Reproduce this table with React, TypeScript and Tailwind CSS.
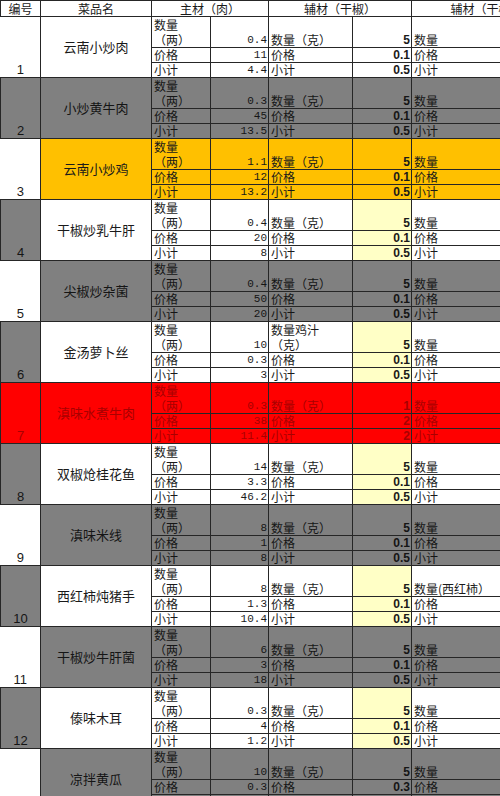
import React from "react";

type Tone = "white" | "gray" | "orange" | "red";

interface Dish {
	no: number;
	name: string;
	tone: Tone;
	noTone: Tone;
	main: [string, string, string];
	aux: [string, string, string];
	auxLabel?: React.ReactNode;
	extraLabel?: string;
	plainAux?: boolean;
}

const dishes: Dish[] = [
	{ no: 1, name: "云南小炒肉", tone: "white", noTone: "white", main: ["0.4", "11", "4.4"], aux: ["5", "0.1", "0.5"], plainAux: true },
	{ no: 2, name: "小炒黄牛肉", tone: "gray", noTone: "gray", main: ["0.3", "45", "13.5"], aux: ["5", "0.1", "0.5"] },
	{ no: 3, name: "云南小炒鸡", tone: "orange", noTone: "white", main: ["1.1", "12", "13.2"], aux: ["5", "0.1", "0.5"] },
	{ no: 4, name: "干椒炒乳牛肝", tone: "white", noTone: "gray", main: ["0.4", "20", "8"], aux: ["5", "0.1", "0.5"] },
	{ no: 5, name: "尖椒炒杂菌", tone: "gray", noTone: "white", main: ["0.4", "50", "20"], aux: ["5", "0.1", "0.5"] },
	{
		no: 6,
		name: "金汤萝卜丝",
		tone: "white",
		noTone: "gray",
		main: ["10", "0.3", "3"],
		aux: ["5", "0.1", "0.5"],
		auxLabel: (
			<>
				数量鸡汁
				<br />
				（克）
			</>
		),
	},
	{ no: 7, name: "滇味水煮牛肉", tone: "red", noTone: "red", main: ["0.3", "38", "11.4"], aux: ["1", "2", "2"] },
	{ no: 8, name: "双椒炝桂花鱼", tone: "white", noTone: "gray", main: ["14", "3.3", "46.2"], aux: ["5", "0.1", "0.5"] },
	{ no: 9, name: "滇味米线", tone: "gray", noTone: "white", main: ["8", "1", "8"], aux: ["5", "0.1", "0.5"] },
	{ no: 10, name: "西红柿炖猪手", tone: "white", noTone: "gray", main: ["8", "1.3", "10.4"], aux: ["5", "0.1", "0.5"], extraLabel: "数量(西红柿）" },
	{ no: 11, name: "干椒炒牛肝菌", tone: "gray", noTone: "white", main: ["6", "3", "18"], aux: ["5", "0.1", "0.5"] },
	{ no: 12, name: "傣味木耳", tone: "white", noTone: "gray", main: ["0.3", "4", "1.2"], aux: ["5", "0.1", "0.5"] },
	{ no: 13, name: "凉拌黄瓜", tone: "gray", noTone: "white", main: ["10", "0.3", "3"], aux: ["5", "0.3", "1.5"] },
];

const toneBg: Record<Tone, string> = {
	white: "bg-white text-[#1a1a1a]",
	gray: "bg-[#808080] text-[#151515]",
	orange: "bg-[#ffc000] text-[#1a1a1a]",
	red: "bg-[#ff0000] text-[#a80000]",
};

const cjk = "font-['Noto_Sans_CJK_SC',sans-serif]";
const cell = "border border-[#262626] p-0 leading-[14px]";
const label = `${cell} ${cjk} text-left align-bottom pl-[2px] text-[12px] whitespace-nowrap overflow-hidden`;
const mainNum = `${cell} font-['Liberation_Mono',monospace] text-[11px] text-right align-bottom pr-[1px]`;
const auxNum = `${cell} font-['Liberation_Sans',sans-serif] text-[12px] font-semibold text-right align-bottom pr-[1px]`;

function DishBlock({ dish }: { dish: Dish }) {
	const bg = toneBg[dish.tone];
	const auxBg =
		dish.tone === "white" && !dish.plainAux ? "bg-[#ffffc6] text-[#1a1a1a]" : bg;
	const noCell =
		dish.noTone === "white"
			? "border-0 bg-white text-[#1a1a1a]"
			: `border border-[#262626] ${toneBg[dish.noTone]}`;

	return (
		<>
			<tr className="h-[31px]">
				<td
					rowSpan={3}
					className={`${noCell} p-0 text-center align-bottom font-['Liberation_Sans',sans-serif] text-[13px] leading-[15px]`}
				>
					{dish.no}
				</td>
				<td
					rowSpan={3}
					className={`${cell} ${bg} ${cjk} text-center align-middle text-[13px]`}
				>
					{dish.name}
				</td>
				<td className={`${label} ${bg} align-top leading-[15px]`}>
					数量
					<br />
					（两）
				</td>
				<td className={`${mainNum} ${bg}`}>{dish.main[0]}</td>
				<td className={`${label} ${bg} leading-[15px]`}>{dish.auxLabel ?? "数量（克）"}</td>
				<td className={`${auxNum} ${auxBg}`}>{dish.aux[0]}</td>
				<td className={`${label} ${bg}`}>{dish.extraLabel ?? "数量"}</td>
			</tr>
			<tr className="h-[15px]">
				<td className={`${label} ${bg}`}>价格</td>
				<td className={`${mainNum} ${bg}`}>{dish.main[1]}</td>
				<td className={`${label} ${bg}`}>价格</td>
				<td className={`${auxNum} ${auxBg}`}>{dish.aux[1]}</td>
				<td className={`${label} ${bg}`}>价格</td>
			</tr>
			<tr className="h-[15px]">
				<td className={`${label} ${bg}`}>小计</td>
				<td className={`${mainNum} ${bg}`}>{dish.main[2]}</td>
				<td className={`${label} ${bg}`}>小计</td>
				<td className={`${auxNum} ${auxBg}`}>{dish.aux[2]}</td>
				<td className={`${label} ${bg}`}>小计</td>
			</tr>
		</>
	);
}

export default function App() {
	return (
		<div className="h-[796px] w-[500px] overflow-hidden bg-white">
			<table className="w-[561px] table-fixed border-collapse">
				<colgroup>
					<col className="w-[40px]" />
					<col className="w-[111px]" />
					<col className="w-[59px]" />
					<col className="w-[58px]" />
					<col className="w-[84px]" />
					<col className="w-[59px]" />
					<col className="w-[150px]" />
				</colgroup>
				<thead>
					<tr className="h-[16px]">
						{[
							{ t: "编号", span: 1 },
							{ t: "菜品名", span: 1 },
							{ t: "主材（肉）", span: 2 },
							{ t: "辅材（干椒）", span: 2 },
							{ t: "辅材（干椒）", span: 1 },
						].map((h, i) => (
							<th
								key={i}
								colSpan={h.span}
								className={`${cell} ${cjk} bg-white text-center text-[12px] font-normal text-[#1a1a1a]`}
							>
								{h.t}
							</th>
						))}
					</tr>
				</thead>
				<tbody>
					{dishes.map((d) => (
						<DishBlock key={d.no} dish={d} />
					))}
				</tbody>
			</table>
		</div>
	);
}
